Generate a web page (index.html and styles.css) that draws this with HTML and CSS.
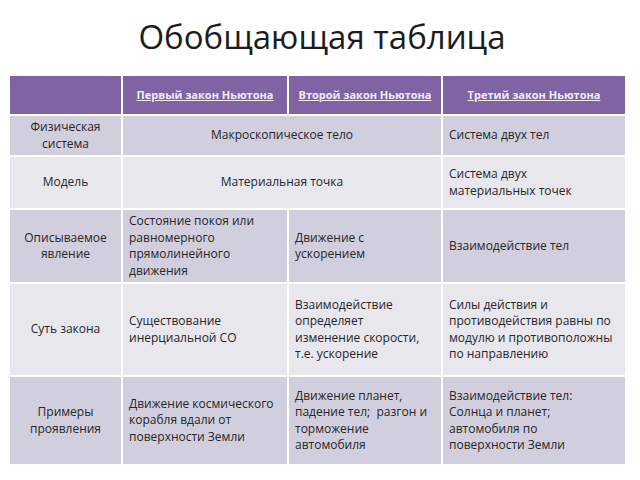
FILE: index.html
```html
<!DOCTYPE html>
<html lang="ru">
<head>
<meta charset="utf-8">
<title>Обобщающая таблица</title>
<link rel="stylesheet" href="styles.css">
</head>
<body>
<div class="slide">
  <h1 class="title">Обобщающая таблица</h1>
  <div class="table">
    <div class="cell head"></div>
    <div class="cell head center"><a class="hlink">Первый закон Ньютона</a></div>
    <div class="cell head center"><a class="hlink">Второй закон Ньютона</a></div>
    <div class="cell head center"><a class="hlink">Третий закон Ньютона</a></div>

    <div class="cell dark center small">Физическая<br>система</div>
    <div class="cell dark center span2">Макроскопическое тело</div>
    <div class="cell dark">Система двух тел</div>

    <div class="cell light center">Модель</div>
    <div class="cell light center span2">Материальная точка</div>
    <div class="cell light">Система двух<br>материальных точек</div>

    <div class="cell dark center">Описываемое<br>явление</div>
    <div class="cell dark">Состояние покоя или<br>равномерного<br>прямолинейного<br>движения</div>
    <div class="cell dark">Движение с<br>ускорением</div>
    <div class="cell dark">Взаимодействие тел</div>

    <div class="cell light center">Суть закона</div>
    <div class="cell light">Существование<br>инерциальной СО</div>
    <div class="cell light">Взаимодействие<br>определяет<br>изменение скорости,<br>т.е. ускорение</div>
    <div class="cell light">Силы действия и<br>противодействия равны по<br>модулю и противоположны<br>по направлению</div>

    <div class="cell dark center">Примеры<br>проявления</div>
    <div class="cell dark">Движение космического<br>корабля вдали от<br>поверхности Земли</div>
    <div class="cell dark">Движение планет,<br>падение тел;&nbsp; разгон и<br>торможение<br>автомобиля</div>
    <div class="cell dark">Взаимодействие тел:<br>Солнца и планет;<br>автомобиля по<br>поверхности Земли</div>
  </div>
</div>
</body>
</html>
```

FILE: styles.css
```css
html, body {
  margin: 0;
  padding: 0;
  background: #ffffff;
}

.slide {
  width: 640px;
  height: 480px;
  box-sizing: border-box;
  padding: 0 16px 0 10px;
  font-family: "Open Sans", "Liberation Sans", sans-serif;
  color: #222222;
}

.title {
  margin: 0;
  height: 76px;
  display: flex;
  align-items: center;
  justify-content: center;
  padding-left: 10px;
  font-family: "Open Sans", sans-serif;
  font-weight: 400;
  font-size: 33px;
  color: #1c1c1c;
  box-sizing: border-box;
  padding-bottom: 4px;
}

.table {
  display: grid;
  grid-template-columns: 111px 164px 152px 182px;
  grid-template-rows: 38px 39px 51px 72px 91px 87px;
  gap: 2px;
  width: 615px;
}

.cell {
  display: flex;
  align-items: center;
  padding: 0 6px;
  font-size: 12px;
  line-height: 16.5px;
  white-space: nowrap;
  color: #262626;
}

.center {
  justify-content: center;
  text-align: center;
}

.span2 {
  grid-column: span 2;
}

.head {
  background: #7f63a3;
}

.hlink {
  color: #f1ecf7;
  text-decoration: underline;
  font-weight: 700;
  font-size: 11px;
}

.dark {
  background: #d1cfdd;
}

.light {
  background: #e8e7ee;
}
```
